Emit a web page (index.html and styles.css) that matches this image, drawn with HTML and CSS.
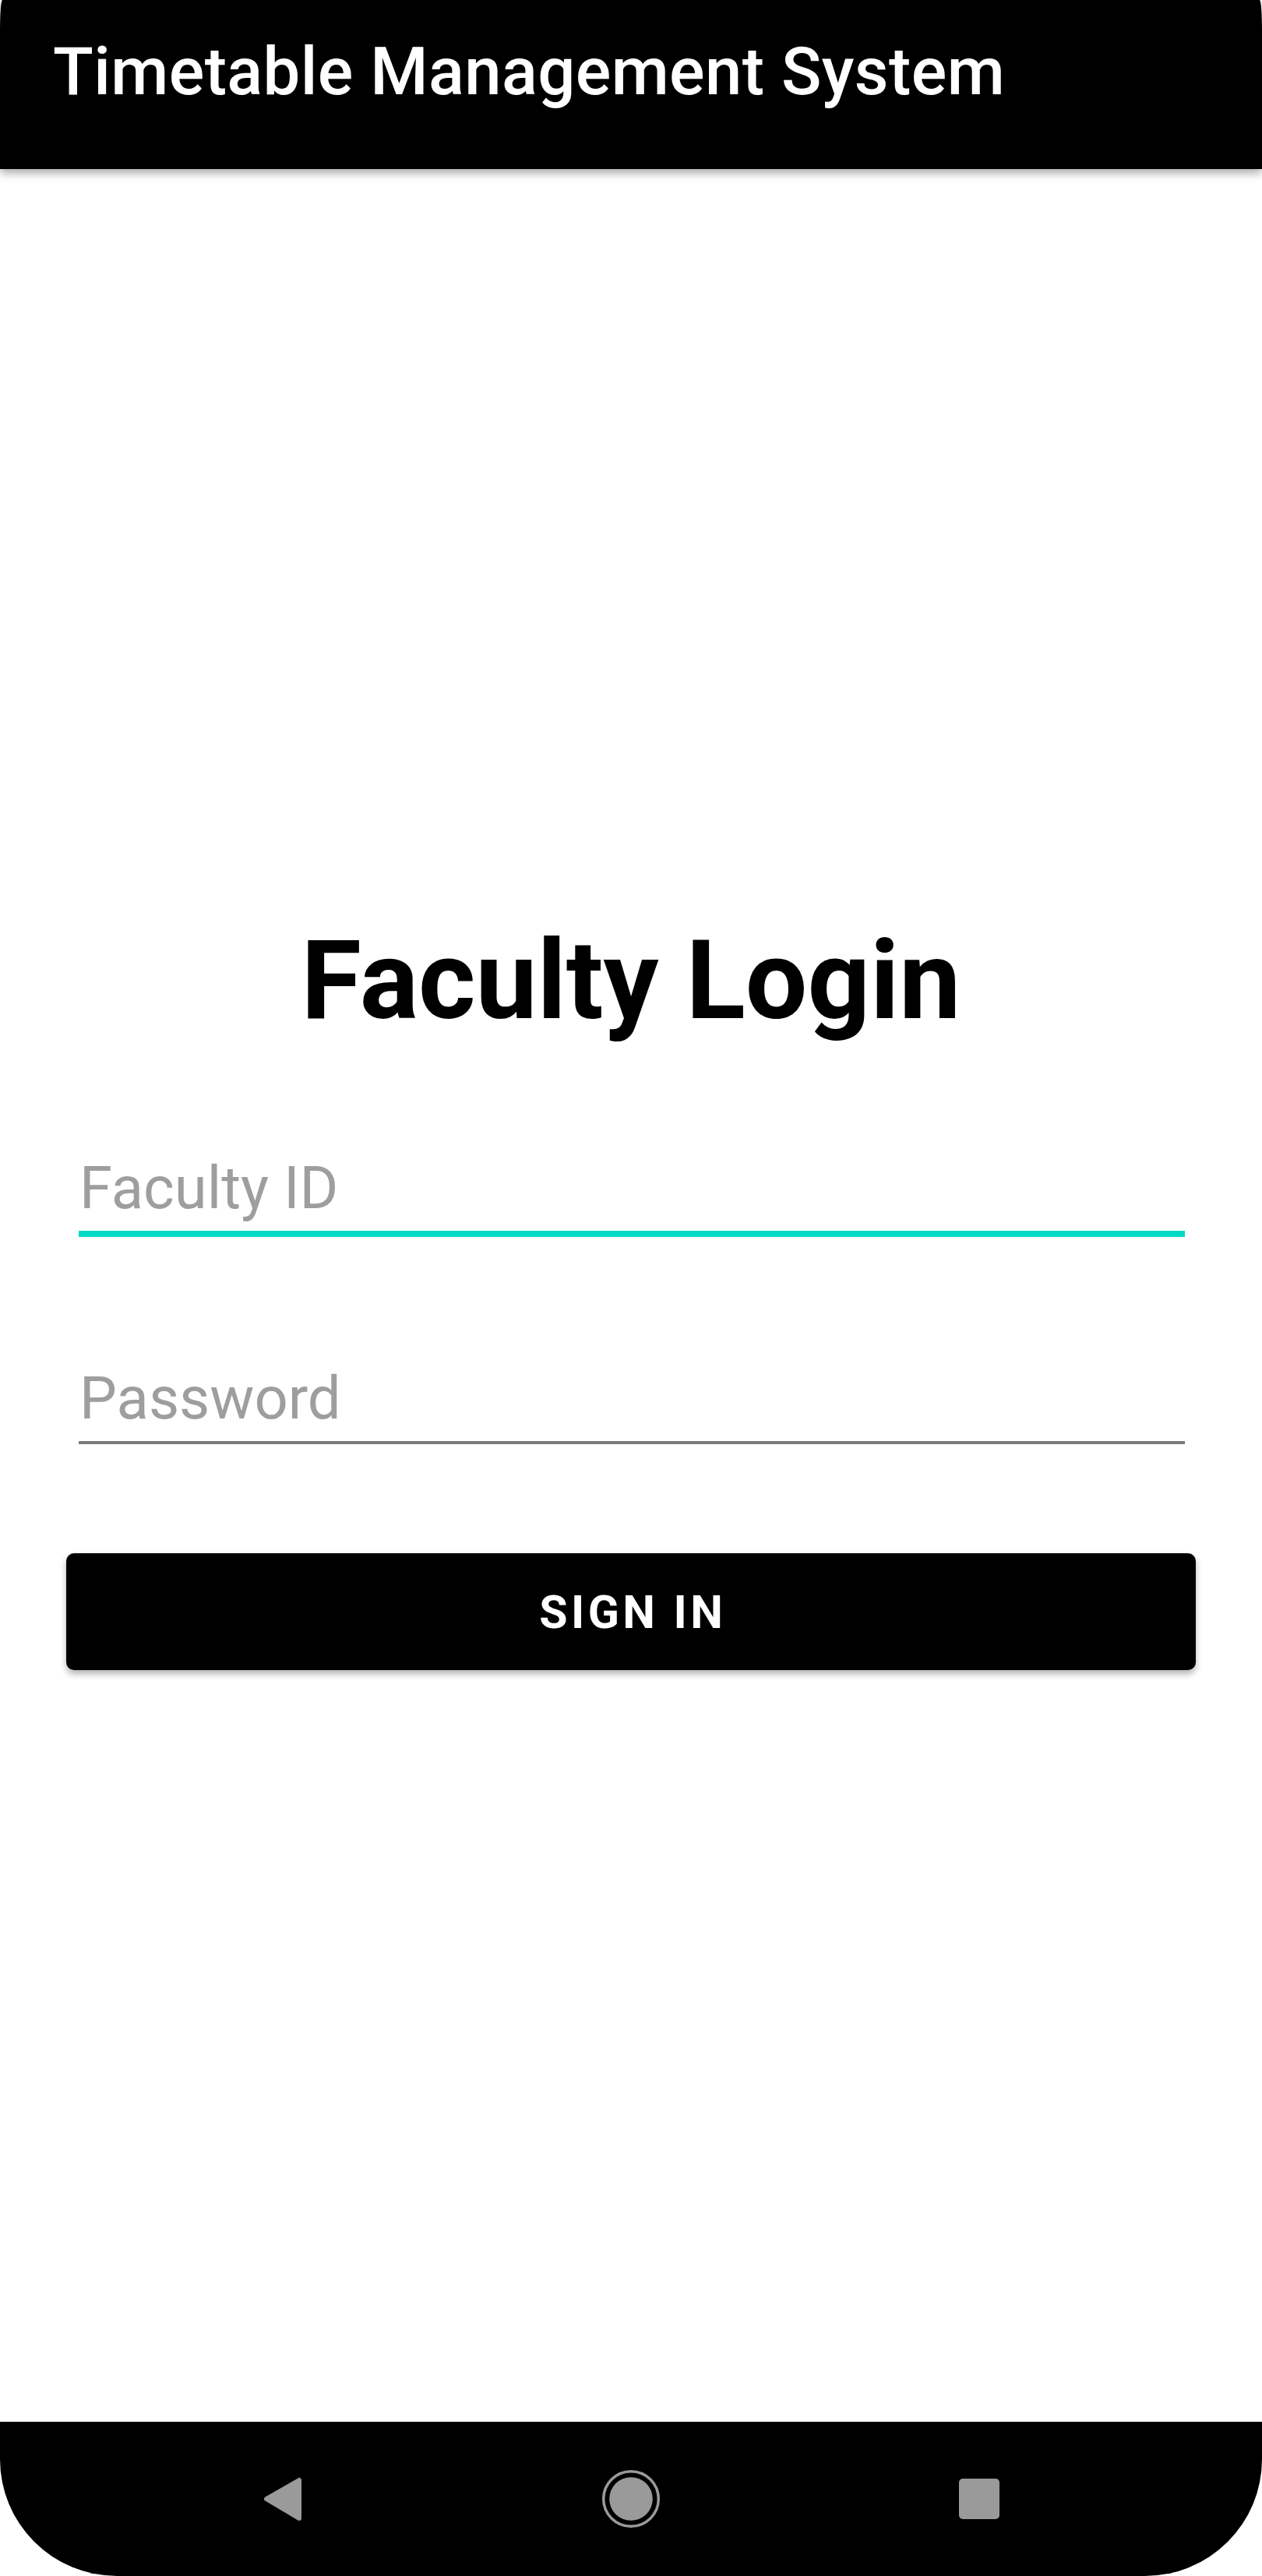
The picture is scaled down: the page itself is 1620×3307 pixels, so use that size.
FILE: index.html
```html
<!DOCTYPE html>
<html lang="en">
<head>
<meta charset="utf-8">
<title>Timetable Management System</title>
<link rel="stylesheet" href="styles.css">
</head>
<body>
<div class="screen">
  <header class="app-bar">
    <h1 class="app-title">Timetable Management System</h1>
  </header>
  <main class="content">
    <h2 class="login-title">Faculty Login</h2>
    <form class="login-form">
      <input class="field field-focused" type="text" placeholder="Faculty ID">
      <input class="field field-idle" type="password" placeholder="Password">
      <button class="sign-in" type="button">SIGN IN</button>
    </form>
  </main>
  <nav class="nav-bar">
    <span class="nav-btn">
      <svg width="80" height="80" viewBox="0 0 80 80"><polygon points="19,40 61,16 61,65" fill="#9a9a9a" stroke="#9a9a9a" stroke-width="6" stroke-linejoin="round"/></svg>
    </span>
    <span class="nav-btn">
      <svg width="80" height="80" viewBox="0 0 80 80"><circle cx="40" cy="40" r="35.3" fill="none" stroke="#9a9a9a" stroke-width="3.5"/><circle cx="40" cy="40" r="27.8" fill="#9a9a9a"/></svg>
    </span>
    <span class="nav-btn">
      <svg width="80" height="80" viewBox="0 0 80 80"><rect x="14" y="14" width="52" height="52" rx="5" fill="#9a9a9a"/></svg>
    </span>
  </nav>
</div>
</body>
</html>
```
FILE: styles.css
```css
html, body {
  margin: 0;
  padding: 0;
  background: #ffffff;
}

.screen {
  width: 1620px;
  height: 3307px;
  display: flex;
  flex-direction: column;
  font-family: Roboto, "Noto Sans", "Liberation Sans", sans-serif;
  overflow: hidden;
}

.app-bar {
  position: relative;
  z-index: 2;
  height: 217px;
  flex: 0 0 217px;
  background: #000000;
  border-radius: 3px 3px 0 0 / 40px 40px 0 0;
  box-shadow: 0 5px 12px rgba(0, 0, 0, 0.35);
  box-sizing: border-box;
  padding-left: 68px;
}

.app-title {
  margin: 0;
  padding-top: 43px;
  font-size: 85px;
  line-height: 98px;
  font-weight: 500;
  color: #ffffff;
  letter-spacing: 0.4px;
}

.content {
  flex: 1 1 auto;
  display: flex;
  flex-direction: column;
}

.login-title {
  margin: 959px 0 0 0;
  text-align: center;
  font-size: 141px;
  line-height: 166px;
  font-weight: 700;
  color: #000000;
}

.login-form {
  display: flex;
  flex-direction: column;
  margin-top: 138px;
}

.field {
  display: block;
  margin: 0 99px 0 101px;
  padding: 0 0 10px 1px;
  height: 90px;
  line-height: 90px;
  font-family: Roboto, "Noto Sans", "Liberation Sans", sans-serif;
  font-size: 76px;
  color: #000000;
  background: transparent;
  border: none;
  outline: none;
  box-sizing: content-box;
}

.field::placeholder {
  color: #9e9e9e;
  opacity: 1;
}

.field-focused {
  border-bottom: 8px solid #03dac5;
}

.field-idle {
  margin-top: 162px;
  border-bottom: 4px solid #7a7a7a;
}

.sign-in {
  margin: 140px 85px 0 85px;
  height: 150px;
  background: #000000;
  color: #ffffff;
  border: none;
  border-radius: 10px;
  box-shadow: 0 5px 9px rgba(0, 0, 0, 0.3);
  font-family: Roboto, "Noto Sans", "Liberation Sans", sans-serif;
  font-size: 59px;
  font-weight: 700;
  letter-spacing: 0.075em;
  padding: 0 0 0 0.075em;
  display: flex;
  align-items: center;
  justify-content: center;
}

.nav-bar {
  flex: 0 0 198px;
  height: 198px;
  background: #000000;
  border-radius: 0 0 150px 150px;
  display: flex;
  align-items: center;
  justify-content: center;
  gap: 367px;
}

.nav-btn {
  width: 80px;
  height: 80px;
  display: block;
}

.nav-btn svg {
  display: block;
}
```
